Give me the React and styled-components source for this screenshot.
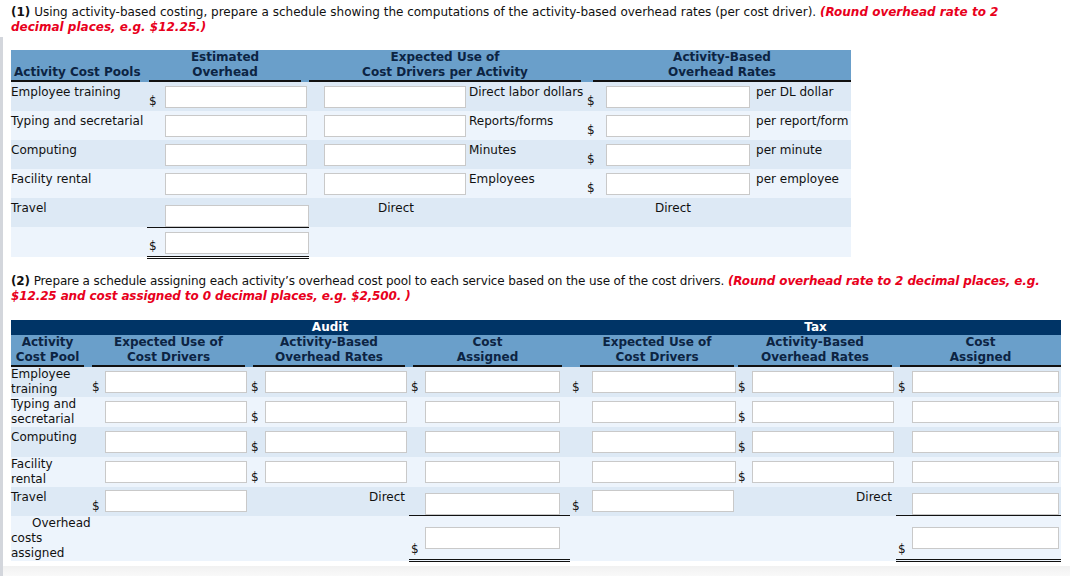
import React from "react";
import styled, { createGlobalStyle } from "styled-components";

const Global = createGlobalStyle`
  html, body { margin: 0; padding: 0; background: #fff; }
  body { font-family: "DejaVu Sans", Verdana, sans-serif; font-size: 12px; color: #111; }
`;

const Page = styled.div`
  width: 1070px;
  height: 576px;
  overflow: hidden;
  display: flex;
  flex-direction: column;
`;
const Content = styled.div`
  padding: 0 9px 4px 8px;
  border-left: 3px solid #d3d6dc;
  margin-top: 2px;
`;
const Prompt = styled.p`
  margin: 0;
  line-height: 15px;
  padding: ${(p) => p.$pad || "0"};
  max-width: ${(p) => p.$mw || "none"};
  letter-spacing: ${(p) => p.$ls || "normal"};
  b { font-weight: bold; }
`;
const Red = styled.span`
  color: #e8001c;
  font-weight: bold;
  font-style: italic;
`;
const Intro = styled.div`
  padding: 5px 9px 0 11px;
`;
const Foot = styled.div`
  flex: 1;
  background: linear-gradient(#f1f1f1, #f9f9f9);
  border-left: 3px solid #d3d6dc;
`;

const Table = styled.table`
  border-collapse: collapse;
  table-layout: fixed;
  width: ${(p) => p.$w}px;
  margin-top: ${(p) => p.$mt || 0}px;
`;
const Band = styled.tr`
  background: #003466;
  th { color: #fff; font-weight: bold; text-align: center; height: 15px; padding: 0; line-height: 14px; }
`;
const HeadRow = styled.tr`
  background: #6a9fca;
`;
const Th = styled.th`
  padding: 0;
  vertical-align: bottom;
  font-weight: bold;
  color: #0c2443;
  white-space: nowrap;
  text-align: ${(p) => p.$align || "center"};
  line-height: 15px;
`;
const ThInner = styled.div`
  border-bottom: 2px solid #111;
  margin: 0 ${(p) => p.$mr ?? 8}px 0 ${(p) => p.$ml || 0}px;
  padding: 0 0 0 ${(p) => p.$pl || 0}px;
`;
const Row = styled.tr`
  background: ${(p) => (p.$alt ? "#edf4fc" : "#dde9f5")};
  height: ${(p) => p.$h}px;
`;
const Label = styled.td`
  padding: 0;
  vertical-align: top;
  padding-top: ${(p) => p.$pt ?? 3}px;
  line-height: 15px;
`;
const Indent = styled.div`
  padding-left: ${(p) => p.$pl || 0}px;
`;
const Dollar = styled.td`
  padding: 0 0 3px 2px;
  vertical-align: bottom;
  border-bottom: ${(p) => (p.$line === "double" ? "3px double #111" : p.$line ? "1px solid #111" : "none")};
`;
const InCell = styled.td`
  padding: 0 ${(p) => p.$pr || 0}px 0 0;
  vertical-align: ${(p) => p.$va || "middle"};
  border-bottom: ${(p) => (p.$line === "double" ? "3px double #111" : p.$line ? "1px solid #111" : "none")};
`;
const Box = styled.input`
  display: block;
  box-sizing: border-box;
  width: 100%;
  height: 22px;
  border: 1px solid #c9c9c9;
  background: #fff;
  margin: ${(p) => p.$m || "0"};
`;
const Empty = styled.td`
  padding: 0;
`;
const TextCell = styled.td`
  padding: ${(p) => p.$pad || "3px 0 0 2px"};
  vertical-align: top;
  text-align: ${(p) => p.$align || "left"};
  line-height: 15px;
  white-space: nowrap;
`;

const t1rows = [
  ["Employee training", "$", "Direct labor dollars", "per DL dollar"],
  ["Typing and secretarial", "", "Reports/forms", "per report/form"],
  ["Computing", "", "Minutes", "per minute"],
  ["Facility rental", "", "Employees", "per employee"],
];

function Table1() {
  return (
    <Table $w={840} $mt={13}>
      <colgroup>
        {[136, 18, 144, 15, 143, 118, 21, 144, 101].map((w, i) => (
          <col key={i} style={{ width: w }} />
        ))}
      </colgroup>
      <tbody>
        <HeadRow>
          <Th $align="left"><ThInner $mr={7} $pl={3}>Activity Cost Pools</ThInner></Th>
          <Th colSpan={2}><ThInner $ml={2} $mr={8}>Estimated<br />Overhead</ThInner></Th>
          <Th colSpan={3}><ThInner $ml={0} $mr={4}>Expected Use of<br />Cost Drivers per Activity</ThInner></Th>
          <Th colSpan={3}><ThInner $ml={8} $mr={0}>Activity-Based<br />Overhead Rates</ThInner></Th>
        </HeadRow>
        {t1rows.map((r, i) => (
          <Row key={i} $alt={i % 2 === 1} $h={29}>
            <Label>{r[0]}</Label>
            <Dollar>{r[1]}</Dollar>
            <InCell $pr={2}><Box /></InCell>
            <Empty />
            <InCell $pr={1}><Box /></InCell>
            <TextCell>{r[2]}</TextCell>
            <Dollar>$</Dollar>
            <InCell><Box /></InCell>
            <TextCell $pad="3px 0 0 6px">{r[3]}</TextCell>
          </Row>
        ))}
        <Row $h={29}>
          <Label>Travel</Label>
          <Dollar $line />
          <InCell $line $va="bottom"><Box /></InCell>
          <Empty />
          <TextCell colSpan={2} $pad="3px 0 0 54px">Direct</TextCell>
          <Empty />
          <TextCell colSpan={2} $pad="3px 0 0 49px">Direct</TextCell>
        </Row>
        <Row $alt $h={30}>
          <Empty />
          <Dollar $line="double">$</Dollar>
          <InCell $line="double" $va="bottom"><Box $m="0 0 2px 0" /></InCell>
          <Empty colSpan={6} />
        </Row>
      </tbody>
    </Table>
  );
}

const t2rows = [
  [["Employee", "training"], true, true, true],
  [["Typing and", "secretarial"], false, true, false],
  [["Computing"], false, true, false],
  [["Facility", "rental"], false, true, false],
];

function Table2() {
  const cols = [79, 15, 144, 16, 144, 16, 145, 22, 144, 16, 144, 16, 149];
  return (
    <Table $w={1050} $mt={16}>
      <colgroup>
        {cols.map((w, i) => (
          <col key={i} style={{ width: w }} />
        ))}
      </colgroup>
      <tbody>
        <Band>
          <th />
          <th colSpan={6}>Audit</th>
          <th colSpan={6}>Tax</th>
        </Band>
        <HeadRow>
          <Th><ThInner $mr={6}>Activity<br />Cost Pool</ThInner></Th>
          <Th colSpan={2}><ThInner $ml={2} $mr={4}>Expected Use of<br />Cost Drivers</ThInner></Th>
          <Th colSpan={2}><ThInner $ml={4} $mr={4}>Activity-Based<br />Overhead Rates</ThInner></Th>
          <Th colSpan={2}><ThInner $ml={4} $mr={8}>Cost<br />Assigned</ThInner></Th>
          <Th colSpan={2}><ThInner $ml={10} $mr={2}>Expected Use of<br />Cost Drivers</ThInner></Th>
          <Th colSpan={2}><ThInner $ml={2} $mr={4}>Activity-Based<br />Overhead Rates</ThInner></Th>
          <Th colSpan={2}><ThInner $ml={4} $mr={0}>Cost<br />Assigned</ThInner></Th>
        </HeadRow>
        {t2rows.map((r, i) => (
          <Row key={i} $alt={i % 2 === 1} $h={30}>
            <Label $pt={r[0].length > 1 ? 0 : 3}>{r[0].map((l, j) => <div key={j}>{l}</div>)}</Label>
            {[0, 1].map((g) => (
              <React.Fragment key={g}>
                <Dollar>{r[1] ? "$" : ""}</Dollar>
                <InCell $pr={g === 0 ? 2 : 0}><Box /></InCell>
                <Dollar>{r[2] ? "$" : ""}</Dollar>
                <InCell $pr={2}><Box /></InCell>
                <Dollar>{r[3] ? "$" : ""}</Dollar>
                <InCell $pr={g === 0 ? 10 : 2}><Box /></InCell>
              </React.Fragment>
            ))}
          </Row>
        ))}
        <Row $h={29}>
          <Label>Travel</Label>
          {[0, 1].map((g) => (
            <React.Fragment key={g}>
              <Dollar>$</Dollar>
              <InCell $pr={2}><Box /></InCell>
              <TextCell colSpan={2} $align="right" $pad="3px 4px 0 0">Direct</TextCell>
              <Dollar $line />
              <InCell $pr={g === 0 ? 10 : 2} $line $va="bottom"><Box /></InCell>
            </React.Fragment>
          ))}
        </Row>
        <Row $alt $h={45}>
          <Label $pt={0}>
            <Indent $pl={21}>Overhead</Indent>
            <Indent>costs</Indent>
            <Indent>assigned</Indent>
          </Label>
          {[0, 1].map((g) => (
            <React.Fragment key={g}>
              <Empty colSpan={4} />
              <Dollar $line="double">$</Dollar>
              <InCell $pr={g === 0 ? 10 : 2} $line="double"><Box /></InCell>
            </React.Fragment>
          ))}
        </Row>
      </tbody>
    </Table>
  );
}

export default function App() {
  return (
    <Page>
      <Global />
      <Intro>
        <Prompt $mw="1000px">
          <b>(1)</b> Using activity-based costing, prepare a schedule showing the computations of the activity-based overhead rates (per cost driver). <Red>(Round overhead rate to 2 decimal places, e.g. $12.25.)</Red>
        </Prompt>
      </Intro>
      <Content>
        <Table1 />
        <Prompt $pad="15px 0 0 0" $ls="-0.12px">
          <b>(2)</b> Prepare a schedule assigning each activity’s overhead cost pool to each service based on the use of the cost drivers. <Red>(Round overhead rate to 2 decimal places, e.g. $12.25 and cost assigned to 0 decimal places, e.g. $2,500. )</Red>
        </Prompt>
        <Table2 />
      </Content>
      <Foot />
    </Page>
  );
}
